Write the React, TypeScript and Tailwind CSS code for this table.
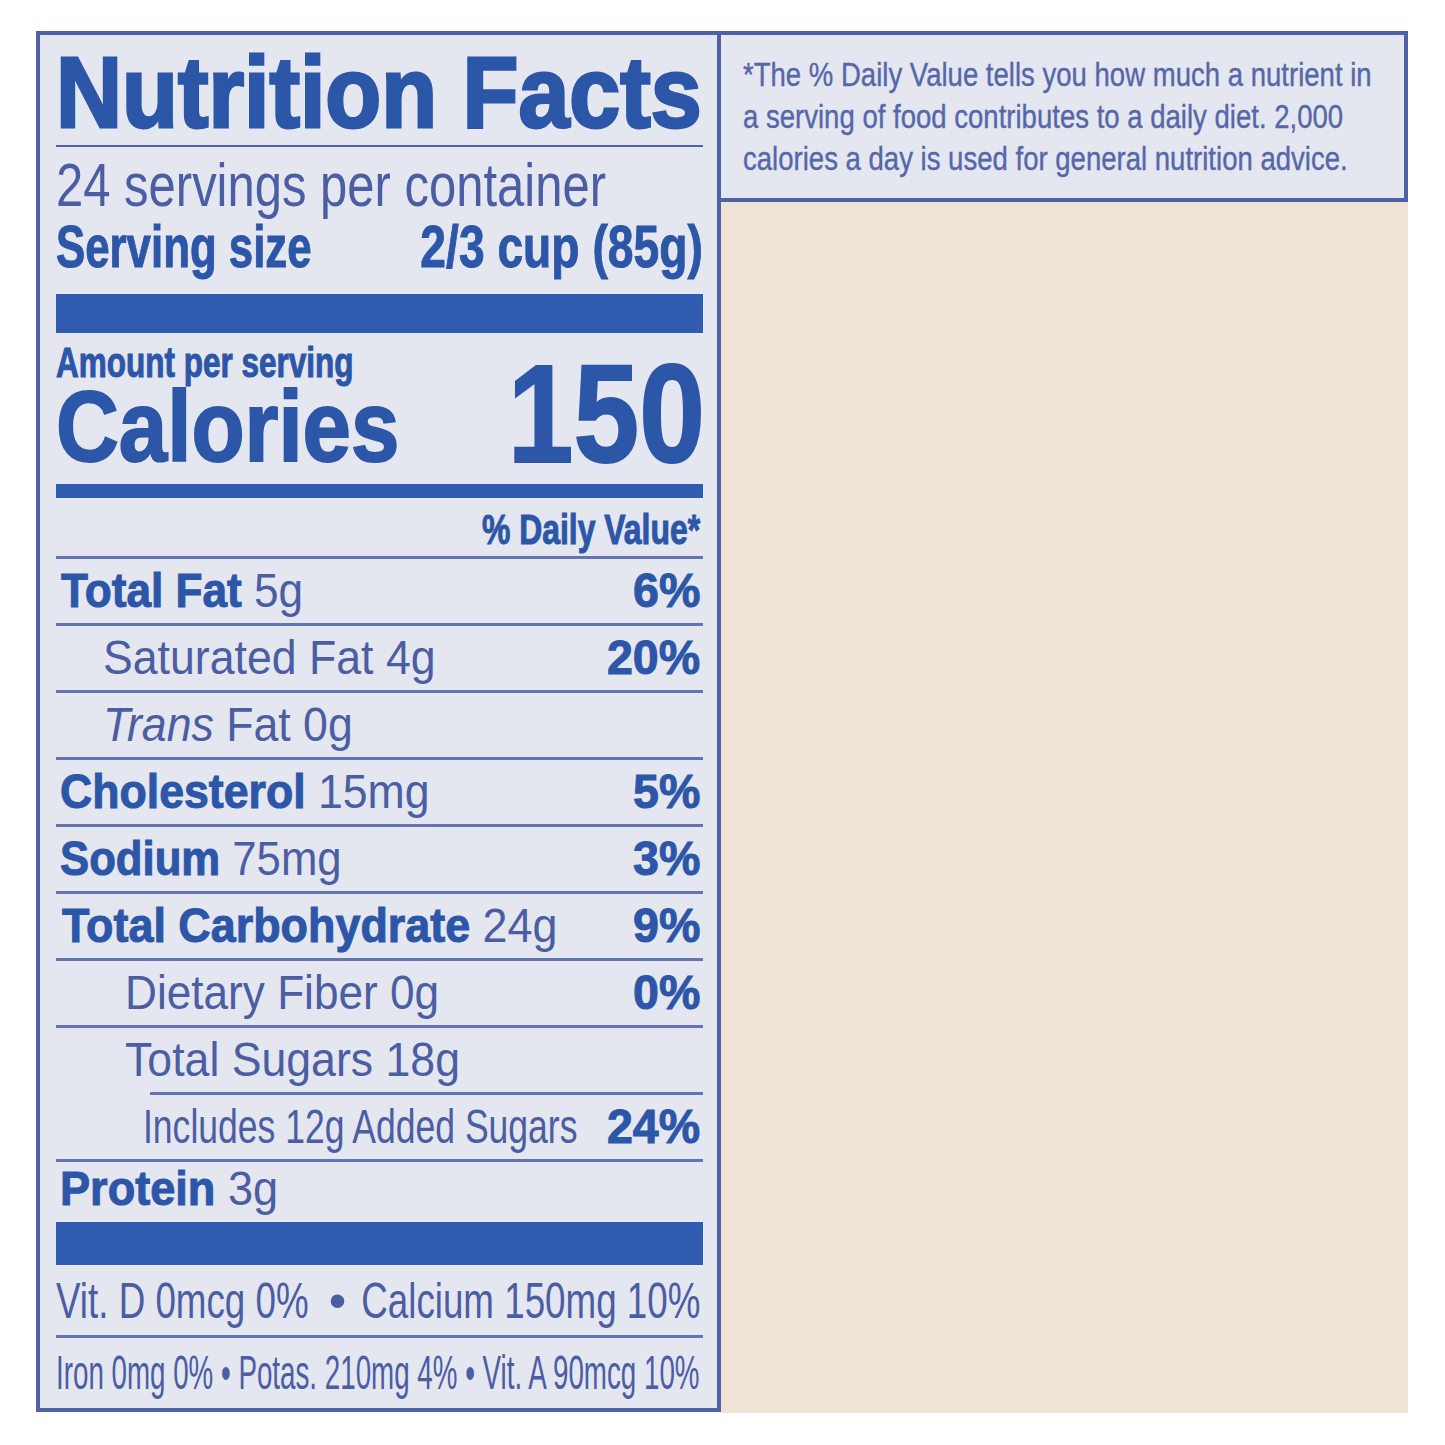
import type { ReactNode } from "react";

// label colours
const BLUE = "text-[#2c56a7]";
const SOFT = "text-[#4b5da3]";

function B({ children }: { children: ReactNode }) {
  return <span className={`font-bold ${BLUE} [-webkit-text-stroke:1px_currentColor]`}>{children}</span>;
}

function Row({
  children,
  pct,
  pad,
  sq,
  line = "ml-0",
}: {
  children: ReactNode;
  pct?: string;
  pad: string;
  sq: string;
  line?: string;
}) {
  return (
    <>
      <div className={`flex h-[64px] items-center pr-[3px] text-[48px] leading-[64px] ${pad}`}>
        <div className="min-w-0 flex-1">
          <span className={`inline-block origin-left whitespace-nowrap ${SOFT} ${sq}`}>{children}</span>
        </div>
        {pct && (
          <span className={`inline-block shrink-0 origin-right scale-x-[0.97] font-bold ${BLUE} [-webkit-text-stroke:1px_currentColor]`}>
            {pct}
          </span>
        )}
      </div>
      <div className={`h-[3px] bg-[#6373b3] ${line}`} />
    </>
  );
}

export default function App() {
  return (
    <div className="min-h-screen overflow-hidden bg-white pl-[36px] pt-[31px] font-['Liberation_Sans',Arial,sans-serif]">
      <div className="flex w-[1372px] items-start">
        {/* Nutrition facts panel */}
        <section className="h-[1381px] w-[685px] shrink-0 overflow-hidden border-4 border-[#4f62a6] bg-[#e4e6f0] pl-[16px] pr-[14px]">
          <div className="pt-[7px]">
            <span className={`inline-block origin-left scale-x-[0.915] whitespace-nowrap text-[100px] font-bold leading-[100px] ${BLUE} [-webkit-text-stroke:3px_currentColor]`}>
              Nutrition Facts
            </span>
          </div>
          <div className="mt-[3px] h-[2px] bg-[#4f62a6]" />

          <div className="mt-[12px] h-[52px] text-[62px] leading-[52px]">
            <span className={`inline-block origin-left scale-x-[0.79] whitespace-nowrap ${SOFT}`}>24 servings per container</span>
          </div>

          <div className={`mt-[10px] flex h-[52px] text-[60px] font-bold leading-[52px] ${BLUE} [-webkit-text-stroke:1px_currentColor]`}>
            <div className="min-w-0 flex-1">
              <span className="inline-block origin-left scale-x-[0.73] whitespace-nowrap">Serving size</span>
            </div>
            <span className="inline-block shrink-0 origin-right scale-x-[0.77] whitespace-nowrap">2/3 cup (85g)</span>
          </div>

          <div className="mt-[21px] h-[39px] bg-[#2f5cb1]" />

          <div className={`mt-[10px] flex items-end font-bold ${BLUE}`}>
            <div className="min-w-0 flex-1">
              <div className="h-[40px] text-[42px] leading-[40px]">
                <span className="inline-block origin-left scale-x-[0.75] whitespace-nowrap [-webkit-text-stroke:1px_currentColor]">
                  Amount per serving
                </span>
              </div>
              <div className="h-[86px] text-[100px] leading-[86px]">
                <span className="inline-block origin-left scale-x-[0.87] whitespace-nowrap [-webkit-text-stroke:2px_currentColor]">
                  Calories
                </span>
              </div>
            </div>
            <span className="-mr-[2px] inline-block shrink-0 origin-right scale-x-[0.85] text-[139px] leading-[110px] [-webkit-text-stroke:2px_currentColor]">
              150
            </span>
          </div>

          <div className="mt-[15px] h-[14px] bg-[#2f5cb1]" />

          <div className={`mt-[10px] flex h-[44px] justify-end pr-[3px] text-[42px] font-bold leading-[44px] ${BLUE}`}>
            <span className="inline-block shrink-0 origin-right scale-x-[0.76] whitespace-nowrap [-webkit-text-stroke:1px_currentColor]">
              % Daily Value*
            </span>
          </div>
          <div className="mt-[4px] h-[3px] bg-[#6373b3]" />

          <Row pad="pl-[5px]" sq="scale-x-[0.92]" pct="6%">
            <B>Total Fat</B> 5g
          </Row>
          <Row pad="pl-[47px]" sq="scale-x-[0.93]" pct="20%">
            Saturated Fat 4g
          </Row>
          <Row pad="pl-[47px]" sq="scale-x-[0.93]">
            <i>Trans</i> Fat 0g
          </Row>
          <Row pad="pl-[4px]" sq="scale-x-[0.93]" pct="5%">
            <B>Cholesterol</B> 15mg
          </Row>
          <Row pad="pl-[4px]" sq="scale-x-[0.91]" pct="3%">
            <B>Sodium</B> 75mg
          </Row>
          <Row pad="pl-[6px]" sq="scale-x-[0.935]" pct="9%">
            <B>Total Carbohydrate</B> 24g
          </Row>
          <Row pad="pl-[69px]" sq="scale-x-[0.92]" pct="0%">
            Dietary Fiber 0g
          </Row>
          <Row pad="pl-[69px]" sq="scale-x-[0.93]" line="ml-[94px]">
            Total Sugars 18g
          </Row>
          <Row pad="pl-[87px]" sq="scale-x-[0.74]" pct="24%">
            Includes 12g Added Sugars
          </Row>

          <div className="h-[60px] pl-[4px] text-[48px] leading-[54px]">
            <span className={`inline-block origin-left scale-x-[0.94] whitespace-nowrap ${SOFT}`}>
              <B>Protein</B> 3g
            </span>
          </div>

          <div className="h-[43px] bg-[#2f5cb1]" />

          <div className={`flex h-[70px] items-start pt-[3px] text-[50px] leading-[67px] ${SOFT}`}>
            <div className="w-[256px] shrink-0">
              <span className="inline-block origin-left scale-x-[0.735] whitespace-nowrap">Vit. D 0mcg 0%</span>
            </div>
            <div className="flex-1 text-center">•</div>
            <div className="flex w-[340px] shrink-0 justify-end pr-[3px]">
              <span className="inline-block shrink-0 origin-right scale-x-[0.735] whitespace-nowrap">Calcium 150mg 10%</span>
            </div>
          </div>
          <div className="h-[3px] bg-[#6373b3]" />

          <div className={`h-[70px] text-[48px] leading-[70px] ${SOFT}`}>
            <span className="inline-block origin-left scale-x-[0.578] whitespace-nowrap">
              Iron 0mg 0% • Potas. 210mg 4% • Vit. A 90mcg 10%
            </span>
          </div>
        </section>

        {/* Footnote + blank panel */}
        <div className="flex h-[1382px] w-[687px] min-w-0 shrink-0 flex-col">
          <div className={`h-[171px] min-w-0 overflow-hidden border-y-4 border-r-4 border-[#4f62a6] bg-[#e4e6f0] pl-[22px] pt-[18px] text-[34px] leading-[42px] text-[#5667a9] [-webkit-text-stroke:0.4px_currentColor]`}>
            <div className="h-[42px]">
              <span className="inline-block origin-left scale-x-[0.81] whitespace-nowrap">*The % Daily Value tells you how much a nutrient in</span>
            </div>
            <div className="h-[42px]">
              <span className="inline-block origin-left scale-x-[0.81] whitespace-nowrap">a serving of food contributes to a daily diet. 2,000</span>
            </div>
            <div className="h-[42px]">
              <span className="inline-block origin-left scale-x-[0.81] whitespace-nowrap">calories a day is used for general nutrition advice.</span>
            </div>
          </div>
          <div className="flex-1 bg-[#efe3d5]" />
        </div>
      </div>
    </div>
  );
}
